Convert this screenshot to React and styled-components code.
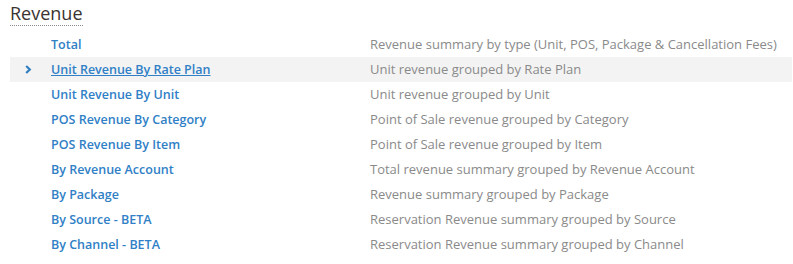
import React from "react";
import styled, { createGlobalStyle } from "styled-components";

const Global = createGlobalStyle`
  html, body { margin: 0; padding: 0; background: #fff; }
  body { font-family: "Open Sans", "Liberation Sans", sans-serif; }
`;

const Page = styled.div`
  padding: 0 1px 0 10px;
`;

const Title = styled.h2`
  display: inline-block;
  margin: 0;
  padding-top: 1px;
  font-size: 18px;
  font-weight: 400;
  line-height: 24px;
  color: #3a3330;
  border-bottom: 1px dotted #888;
`;

const List = styled.div`
  margin-top: 6px;
  display: flex;
  flex-direction: column;
`;

const Row = styled.div`
  display: grid;
  grid-template-columns: 41px 319px 1fr;
  align-items: center;
  height: 25px;
  line-height: 25px;
  background: ${(p) => (p.$active ? "#f3f3f3" : "transparent")};
`;

const Chevron = styled.span`
  display: flex;
  align-items: center;
  padding-left: 15px;
  margin-top: -1px;
  color: #2f7fc1;
`;

const Link = styled.a`
  font-size: 12.5px;
  font-weight: 600;
  line-height: 25px;
  color: #2f80c6;
  text-decoration: ${(p) => (p.$active ? "underline" : "none")};
  white-space: nowrap;
`;

const Desc = styled.span`
  font-size: 13px;
  line-height: 25px;
  margin-top: -1px;
  color: #8a8a8a;
  white-space: nowrap;
`;

const rows = [
  ["Total", "Revenue summary by type (Unit, POS, Package & Cancellation Fees)"],
  ["Unit Revenue By Rate Plan", "Unit revenue grouped by Rate Plan"],
  ["Unit Revenue By Unit", "Unit revenue grouped by Unit"],
  ["POS Revenue By Category", "Point of Sale revenue grouped by Category"],
  ["POS Revenue By Item", "Point of Sale revenue grouped by Item"],
  ["By Revenue Account", "Total revenue summary grouped by Revenue Account"],
  ["By Package", "Revenue summary grouped by Package"],
  ["By Source - BETA", "Reservation Revenue summary grouped by Source"],
  ["By Channel - BETA", "Reservation Revenue summary grouped by Channel"],
];

export default function App() {
  return (
    <Page>
      <Global />
      <Title>Revenue</Title>
      <List>
        {rows.map(([name, desc], i) => {
          const active = i === 1;
          return (
            <Row key={name} $active={active}>
              <Chevron>
                {active && (
                  <svg width="7" height="9" viewBox="0 0 7 9">
                    <path d="M1.2 1 L4.8 4.5 L1.2 8" fill="none" stroke="currentColor" strokeWidth="2.2" />
                  </svg>
                )}
              </Chevron>
              <Link href="#" $active={active}>{name}</Link>
              <Desc>{desc}</Desc>
            </Row>
          );
        })}
      </List>
    </Page>
  );
}
